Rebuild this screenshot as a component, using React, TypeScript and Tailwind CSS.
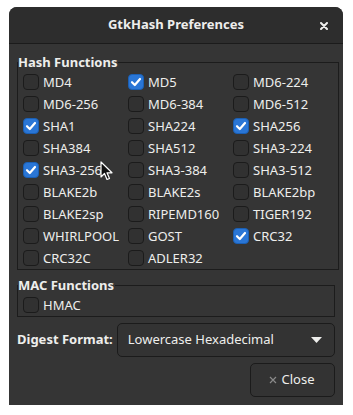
import React from "react";

const rows: [string, boolean][][] = [
  [["MD4", false], ["MD5", true], ["MD6-224", false]],
  [["MD6-256", false], ["MD6-384", false], ["MD6-512", false]],
  [["SHA1", true], ["SHA224", false], ["SHA256", true]],
  [["SHA384", false], ["SHA512", false], ["SHA3-224", false]],
  [["SHA3-256", true], ["SHA3-384", false], ["SHA3-512", false]],
  [["BLAKE2b", false], ["BLAKE2s", false], ["BLAKE2bp", false]],
  [["BLAKE2sp", false], ["RIPEMD160", false], ["TIGER192", false]],
  [["WHIRLPOOL", false], ["GOST", false], ["CRC32", true]],
  [["CRC32C", false], ["ADLER32", false], ["", false]],
];

function Check({ label, checked }: { label: string; checked: boolean }) {
  return (
    <div className="h-[22px] flex items-center gap-[4px]">
      {checked ? (
        <div className="w-[16px] h-[16px] rounded-[4px] bg-[#2a76d6] border border-[#1a5fb4] flex items-center justify-center">
          <svg width="12" height="12" viewBox="0 0 12 12">
            <path d="M2 6.2 L4.8 9 L10 3" fill="none" stroke="#ffffff" strokeWidth="2.2" strokeLinecap="round" strokeLinejoin="round" />
          </svg>
        </div>
      ) : (
        <div className="w-[16px] h-[16px] rounded-[4px] bg-[#313131] border border-[#1b1b1b]" />
      )}
      <span className="text-[13px] text-[#eeeeec] leading-none">{label}</span>
    </div>
  );
}

export default function App() {
  return (
    <div
      className="relative w-[353px] h-[415px] bg-white pt-[7px] pl-[9px]"
      style={{ fontFamily: '"Noto Sans", "Open Sans", sans-serif' }}
    >
      <div className="w-[334px] h-[398px] bg-[#353535] rounded-t-[8px] overflow-hidden flex flex-col text-[#eeeeec]">
        <div className="relative h-[37px] shrink-0 bg-[#2d2d2d] border-b border-[#1b1b1b] flex items-center justify-center">
          <span className="text-[13px] font-bold">GtkHash Preferences</span>
          <div className="absolute right-[15px] top-[15px]">
            <svg width="8" height="8" viewBox="0 0 8 8">
              <path d="M1 1 L7 7 M7 1 L1 7" stroke="#eeeeec" strokeWidth="2" strokeLinecap="round" />
            </svg>
          </div>
        </div>
        <div className="flex flex-col px-2 pt-[10px]">
          <fieldset className="border border-[#1c1c1c] m-0 p-0">
            <legend className="text-[13px] font-bold leading-[17px] pr-[1px]">Hash Functions</legend>
            <div className="grid grid-cols-[105px_105px_105px] pl-[5px]">
              {rows.flat().map(([l, c], i) =>
                l ? <Check key={i} label={l} checked={c} /> : <div key={i} className="h-[22px]" />
              )}
            </div>
          </fieldset>
          <fieldset className="border border-[#1c1c1c] m-0 p-0 mt-[7px]">
            <legend className="text-[13px] font-bold leading-[17px] pr-[1px]">MAC Functions</legend>
            <div className="pl-[5px]">
              <Check label="HMAC" checked={false} />
            </div>
          </fieldset>
          <div className="mt-[6px] flex items-center gap-[4px]">
            <span className="text-[13px] font-bold whitespace-nowrap">Digest Format:</span>
            <div className="flex-1 h-[34px] rounded-[5px] border border-[#1b1b1b] bg-[#333333] flex items-center justify-between pl-[10px] pr-[12px]">
              <span className="text-[13px]">Lowercase Hexadecimal</span>
              <svg width="11" height="6" viewBox="0 0 11 6">
                <path d="M0 0 L11 0 L5.5 6 Z" fill="#eeeeec" />
              </svg>
            </div>
          </div>
          <div className="mt-[6px] flex justify-end">
            <div className="w-[85px] h-[34px] rounded-[5px] border border-[#1b1b1b] bg-[#333333] flex items-center justify-center gap-[5px] pr-[2px]">
              <svg width="8" height="8" viewBox="0 0 8 8">
                <path d="M1 1 L7 7 M7 1 L1 7" stroke="#8a8a8a" strokeWidth="1.2" />
              </svg>
              <span className="text-[13px]">Close</span>
            </div>
          </div>
        </div>
      </div>
      <div className="absolute left-[100px] top-[161px]">
        <svg width="14" height="20" viewBox="0 0 14 20">
          <path d="M1 1 L1 16 L4.5 12.5 L7 18.5 L9.5 17.5 L7 11.8 L12 11.8 Z" fill="#111111" stroke="#ffffff" strokeWidth="1.2" strokeLinejoin="round" />
        </svg>
      </div>
    </div>
  );
}
